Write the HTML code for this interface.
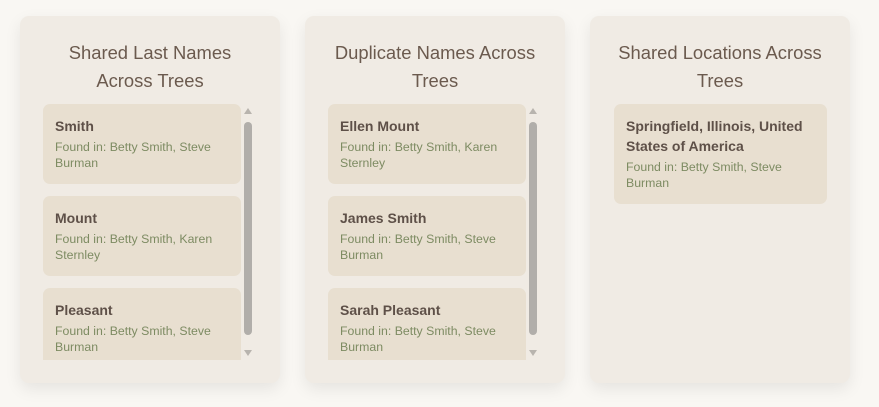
<!DOCTYPE html>
<html><head><style>
*{box-sizing:border-box;margin:0;padding:0}
body{width:879px;height:407px;background:#f9f7f3;font-family:"Liberation Sans",sans-serif;position:relative;overflow:hidden}
.card{position:absolute;top:16px;width:260px;height:367px;background:#f0ebe4;border-radius:9px;box-shadow:0 6px 16px rgba(0,0,0,0.08)}
.t{position:absolute;top:23px;left:0;right:0;text-align:center;color:#6b5a4e;font-size:18.4px;line-height:28px;padding:0 20px}
.list{position:absolute;left:23px;top:88px;width:198px;height:256px;overflow:hidden}
.item{background:#e8dfd0;border-radius:7px;padding:12px 12px 12px;margin-bottom:12px;height:80px}
.item b{display:block;color:#5e5048;font-size:14px;line-height:20px;margin-bottom:3px}
.item span{display:block;color:#7d8b62;font-size:12.3px;line-height:16px}
.sb{position:absolute;left:224px;top:92px;width:8px;height:248px}
.up,.dn{position:absolute;left:0;width:0;height:0;border-left:4px solid transparent;border-right:4px solid transparent}
.up{top:0;border-bottom:6px solid #b8b4ae}
.dn{bottom:0;border-top:6px solid #b8b4ae}
.th{position:absolute;left:0;top:14px;width:8px;height:213px;background:#b1aeaa;border-radius:4px}
</style></head><body>
<div class="card" style="left:20px">
<div class="t">Shared Last Names<br>Across Trees</div>
<div class="list">
<div class="item"><b>Smith</b><span>Found in: Betty Smith, Steve Burman</span></div>
<div class="item"><b>Mount</b><span>Found in: Betty Smith, Karen Sternley</span></div>
<div class="item"><b>Pleasant</b><span>Found in: Betty Smith, Steve Burman</span></div>
</div>
<div class="sb"><div class="up"></div><div class="th"></div><div class="dn"></div></div>
</div>
<div class="card" style="left:305px">
<div class="t">Duplicate Names Across<br>Trees</div>
<div class="list">
<div class="item"><b>Ellen Mount</b><span>Found in: Betty Smith, Karen Sternley</span></div>
<div class="item"><b>James Smith</b><span>Found in: Betty Smith, Steve Burman</span></div>
<div class="item"><b>Sarah Pleasant</b><span>Found in: Betty Smith, Steve Burman</span></div>
</div>
<div class="sb"><div class="up"></div><div class="th"></div><div class="dn"></div></div>
</div>
<div class="card" style="left:590px">
<div class="t" style="padding:0 4px">Shared Locations Across<br>Trees</div>
<div class="list" style="left:24px;width:213px">
<div class="item" style="height:100px;padding-right:20px"><b>Springfield, Illinois, United States of America</b><span>Found in: Betty Smith, Steve Burman</span></div>
</div>
</div>
</body></html>
